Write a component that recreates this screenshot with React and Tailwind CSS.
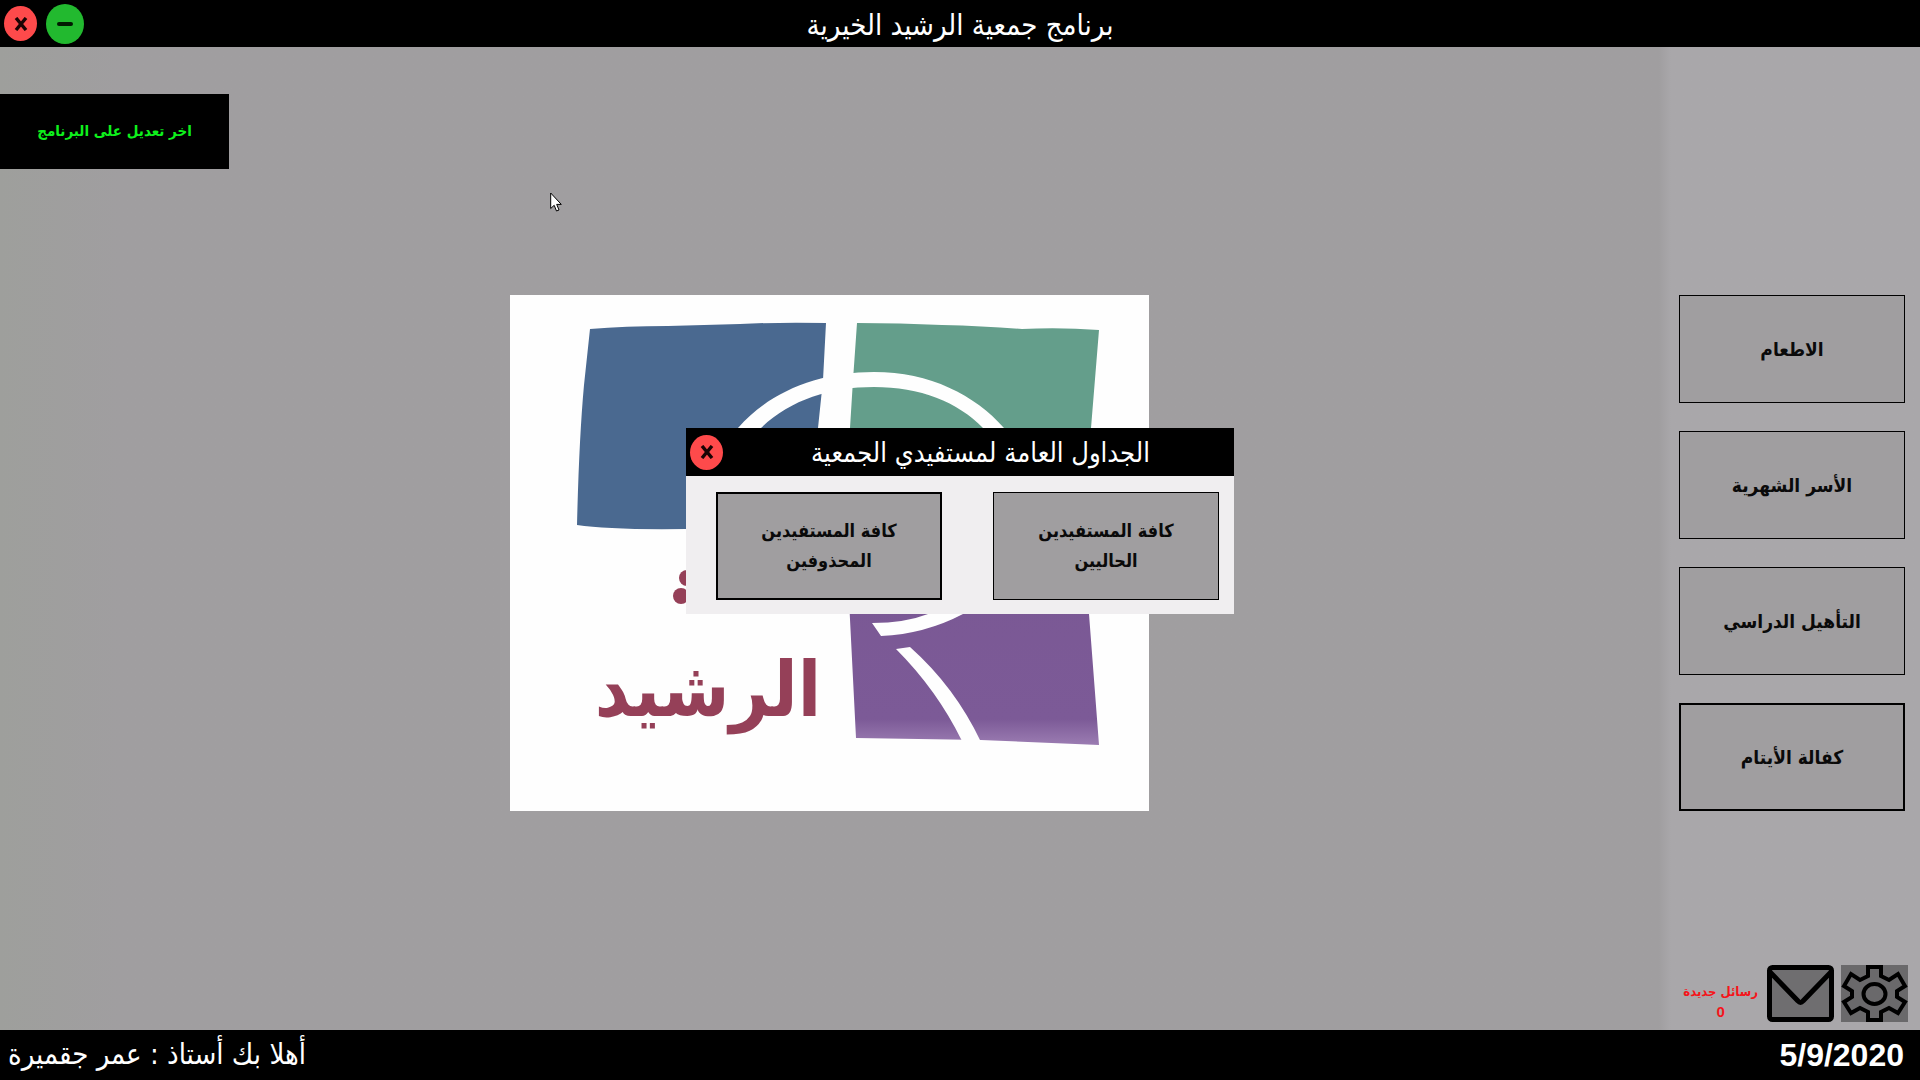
function CloseButton({ label }) {
  return (
    <button type="button" aria-label={label} className="flex h-[35px] w-[33px] shrink-0 items-center justify-center rounded-[50%] bg-[#fe4a4b]">
      <svg viewBox="0 0 14 14" className="size-3.5" fill="none" stroke="#1a0404" strokeWidth="3.4">
        <path d="M2 1l10 12M12 1L2 13" />
      </svg>
    </button>
  );
}

function MinimizeButton() {
  return (
    <button type="button" aria-label="تصغير" className="flex h-10 w-[38px] shrink-0 items-center justify-center rounded-[50%] bg-[#22b92f]">
      <span className="h-1 w-4 rounded-sm bg-[#021a02]" />
    </button>
  );
}

function TileButton({ children, active }) {
  return (
    <button
      type="button"
      dir="rtl"
      className={
        "flex h-[108px] w-[226px] shrink-0 items-center justify-center border-black bg-[#a09ea0] px-8 text-center leading-[30px] font-bold text-[#0a0a0a] " +
        (active ? "border-2" : "border")
      }
    >
      {children}
    </button>
  );
}

function Logo() {
  return (
    <svg viewBox="510 295 639 516" className="h-[516px] w-[639px] shrink-0 bg-[#fefefe]" role="img" aria-label="الرشيد">
      <defs>
        <linearGradient id="violet" x1="0" y1="0" x2="0" y2="1">
          <stop offset="0" stopColor="#7a5894" />
          <stop offset="0.86" stopColor="#7c5a97" />
          <stop offset="1" stopColor="#9b7cb2" />
        </linearGradient>
      </defs>
      <path fill="#4a6990" d="M590 329Q625 326 668 326L740 324Q780 322 826 323L823 380L818 428L815 529H686Q610 530 577 525Q579 440 584 385Z" />
      <path fill="#649e8b" d="M857 323Q900 323 942 325Q985 326 1022 329Q1060 327 1099 330L1091 428L1088 529H848L850 428L853 380Z" />
      <path fill="url(#violet)" d="M847 560H1087L1089 614L1099 745L981 740L856 738Z" />
      <path fill="#fefefe" d="M738 428C770 391 820 372 874 372C930 372 975 395 1004 428V460H983V428C958 402 920 387 874 387C830 387 790 400 761 428V460H738Z" />
      <path fill="#fefefe" d="M928 614Q905 623 872 623L881 636Q925 634 963 614V600H928Z" />
      <path fill="#fefefe" d="M896 649L910 647Q955 687 981 742L962 741Q937 690 896 649Z" />
      <circle cx="687" cy="578" r="8" fill="#954058" />
      <circle cx="681" cy="596" r="8" fill="#954058" />
      <text
        x="708"
        y="716"
        direction="rtl"
        textAnchor="middle"
        fill="#954058"
        className='font-["DejaVu_Sans_Condensed","DejaVu_Sans",sans-serif] text-[76px] font-bold'
      >
        الرشيد
      </text>
    </svg>
  );
}

function MailIcon() {
  return (
    <svg viewBox="0 0 67 57" className="h-[57px] w-[67px]">
      <rect x="2.5" y="2.5" width="62" height="52" rx="3" fill="#6f6e70" stroke="#000" strokeWidth="5" />
      <path d="M3 7L31 36Q33.500 39 36 36L64 7" fill="none" stroke="#000" strokeWidth="5" />
    </svg>
  );
}

function GearIcon() {
  return (
    <svg viewBox="0 0 67 57" className="h-[57px] w-[67px] bg-[#6a696b]">
      <path
        d="M27 2H40V11L48 15L57 9L64 21L56 26V32L64 37L57 48L48 43L40 47V55H27V47L19 43L10 48L3 37L11 32V26L3 21L10 9L19 15L27 11Z"
        fill="#6a696b"
        stroke="#000"
        strokeWidth="4"
      />
      <ellipse cx="33.5" cy="29" rx="11" ry="10" fill="#6a696b" stroke="#000" strokeWidth="4" />
    </svg>
  );
}

function Dialog() {
  return (
    <section role="dialog" aria-labelledby="dialog-title" className="absolute top-[381px] left-1/2 w-[548px] -translate-x-1/2 bg-[#f0eef0]">
      <header className="flex h-12 items-center bg-black pl-1">
        <CloseButton label="إغلاق النافذة" />
        <h2 id="dialog-title" dir="rtl" className="flex-1 pt-0.5 pl-1 text-center text-[27px] leading-10 text-white">
          الجداول العامة لمستفيدي الجمعية
        </h2>
      </header>
      <div className="flex justify-between pt-4 pr-[15px] pb-3.5 pl-[30px] text-lg">
        <TileButton active>
          كافة المستفيدين
          <br />
          المحذوفين
        </TileButton>
        <TileButton>
          كافة المستفيدين
          <br />
          الحاليين
        </TileButton>
      </div>
    </section>
  );
}

function Cursor() {
  return (
    <svg viewBox="0 0 12 20" className="absolute top-[145px] left-[550px] h-5 w-3">
      <path d="M.7 1V16.5L4.200 13.300L6.500 19L9 18L6.700 12.400H11.300Z" fill="#fff" stroke="#000" />
    </svg>
  );
}

export default function App() {
  return (
    <div className='flex min-h-screen flex-col bg-[#a09ea0] font-["DejaVu_Sans_Condensed","DejaVu_Sans",sans-serif]'>
      <header className="grid h-[47px] grid-cols-[1fr_auto_1fr] items-center bg-black">
        <div className="flex items-center gap-[9px] pl-1">
          <CloseButton label="إغلاق" />
          <MinimizeButton />
        </div>
        <h1 dir="rtl" className="pt-0.5 text-[29px] leading-10 text-white">
          برنامج جمعية الرشيد الخيرية
        </h1>
      </header>

      <main className="relative flex flex-1">
        <div className="flex flex-1 flex-col bg-linear-to-r from-[#9e9f9c] to-[#a09ea0] to-[120px] pt-[47px]">
          <button type="button" dir="rtl" className="h-[75px] w-[229px] bg-black text-[15px] font-bold text-[#0ef01c]">
            اخر تعديل على البرنامج
          </button>
          <div className="flex justify-center pt-[126px]">
            <Logo />
          </div>
        </div>

        <aside className="flex w-[261px] flex-col bg-linear-to-r from-[#a09ea0] to-[#a9a7aa] to-[12px] pt-[248px] pb-2">
          <nav className="flex flex-col gap-7 pl-5 text-[19px]">
            <TileButton>الاطعام</TileButton>
            <TileButton>الأسر الشهرية</TileButton>
            <TileButton>التأهيل الدراسي</TileButton>
            <TileButton active>كفالة الأيتام</TileButton>
          </nav>
          <div className="mt-auto flex items-end justify-end gap-[7px] pr-3">
            <div dir="rtl" className="pr-0.5 text-center text-[13px] leading-5 font-bold whitespace-nowrap text-[#f5141a]">
              <p>رسائل جديدة</p>
              <p className='font-["Liberation_Sans",sans-serif] text-[15px]'>0</p>
            </div>
            <button type="button" aria-label="الرسائل">
              <MailIcon />
            </button>
            <button type="button" aria-label="الإعدادات">
              <GearIcon />
            </button>
          </div>
        </aside>

        <Dialog />
        <Cursor />
      </main>

      <footer className="flex h-[50px] items-center justify-between bg-black pr-4 pl-2 text-[29px] text-white">
        <p dir="rtl">أهلا بك أستاذ : عمر جقميرة</p>
        <time dateTime="2020-09-05" className='font-["Liberation_Sans",sans-serif] text-[32px] font-bold'>
          5/9/2020
        </time>
      </footer>
    </div>
  );
}
